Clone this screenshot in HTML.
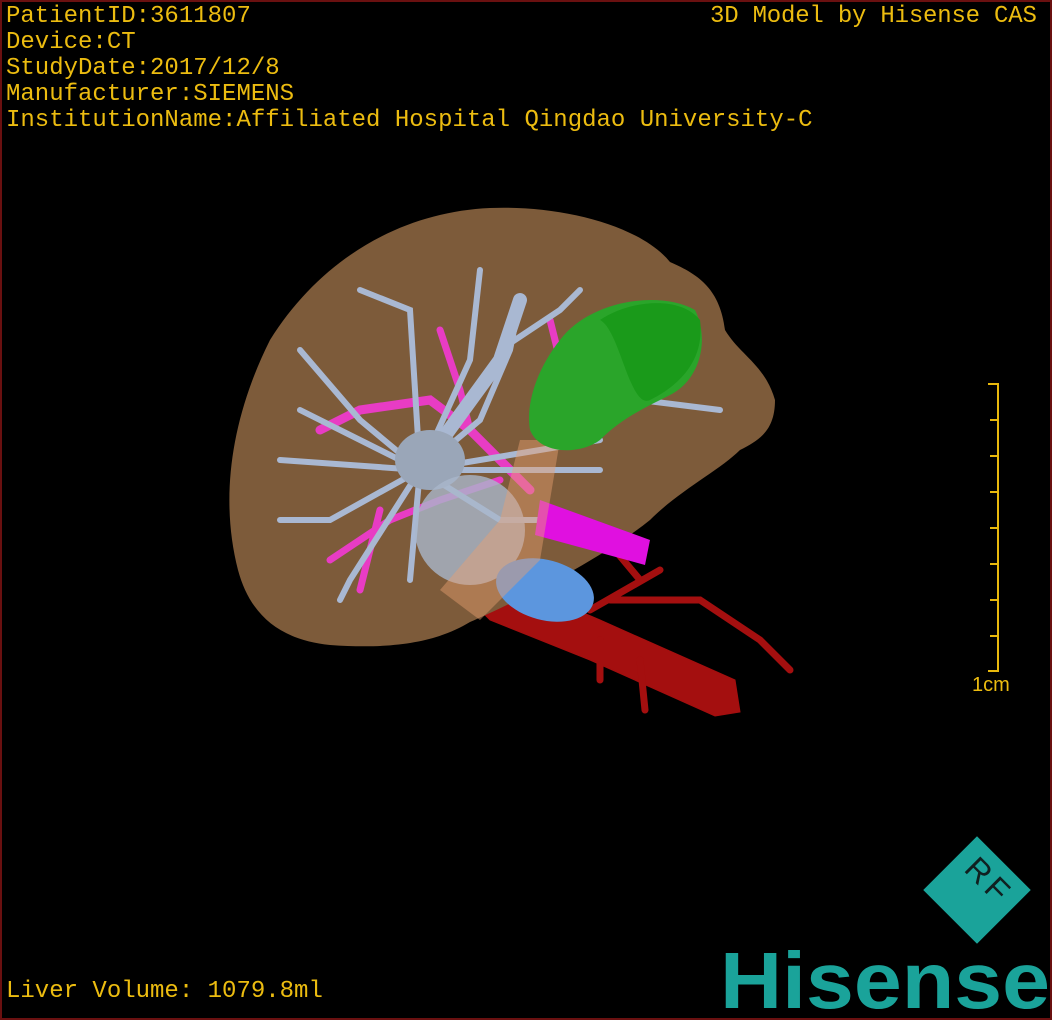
<!DOCTYPE html>
<html><head><meta charset="utf-8"><style>
html,body{margin:0;padding:0;background:#000}
#w{position:relative;width:1048px;height:1016px;border:2px solid #6a1010;background:#000;overflow:hidden}
.t{position:absolute;color:#ecbc10;font-family:"Liberation Mono",monospace;font-size:24px;line-height:26px;white-space:pre;letter-spacing:0}
svg{position:absolute;left:0;top:0}
</style></head><body><div id="w">
<div class="t" style="left:4px;top:2px">PatientID:3611807
Device:CT
StudyDate:2017/12/8
Manufacturer:SIEMENS
InstitutionName:Affiliated Hospital Qingdao University-C</div>
<div class="t" style="left:708px;top:2px;letter-spacing:-0.2px">3D Model by Hisense CAS</div>
<div class="t" style="left:4px;top:977px">Liver Volume: 1079.8ml</div>
<div class="t" style="left:970px;top:670px;font-family:'Liberation Sans',sans-serif;font-size:20px">1cm</div>
<svg width="1048" height="1016" viewBox="2 2 1048 1016">
<g stroke="#e8b80c" stroke-width="2">
<line x1="998" y1="383" x2="998" y2="672"/>
<line x1="988" y1="384" x2="998" y2="384"/><line x1="990" y1="420" x2="998" y2="420"/><line x1="990" y1="456" x2="998" y2="456"/><line x1="990" y1="492" x2="998" y2="492"/><line x1="990" y1="528" x2="998" y2="528"/><line x1="990" y1="564" x2="998" y2="564"/><line x1="990" y1="600" x2="998" y2="600"/><line x1="990" y1="636" x2="998" y2="636"/><line x1="988" y1="671" x2="998" y2="671"/>
</g>
<g fill="#a40f0f" stroke="#a40f0f" stroke-linecap="round">
<path d="M470 600 L530 590 L600 620 L735 680 L740 712 L715 716 L590 660 L490 620Z"/>
<path d="M590 610 L660 570 M610 600 L700 600 L760 640 L790 670 M640 580 L590 520 M600 640 L600 680 M640 660 L645 710" fill="none" stroke-width="7"/>
</g>
<path d="M490 208 C560 205 640 225 670 262 C700 275 720 290 725 330 C740 355 765 365 775 400 C775 430 760 440 740 450 C720 470 680 490 650 520 C600 560 520 600 470 622 C440 640 400 650 330 645 C280 640 250 615 238 570 C220 500 230 420 270 340 C320 260 400 212 490 208Z" fill="#7d5b3a"/>
<g stroke="#e83cc4" fill="none" stroke-linecap="round">
<path d="M320 430 L360 410 L430 400 L470 430 L500 460 L530 490" stroke-width="9"/>
<path d="M440 330 L460 390 L470 430 M330 560 L390 520 L440 500 L500 480 M380 510 L360 590 M550 320 L560 360" stroke-width="7"/>
</g>
<g stroke="#a9b8d2" fill="none" stroke-linecap="round" stroke-width="6">
<path d="M420 470 L360 420 L300 350 M420 470 L280 460 M420 470 L330 520 L280 520 M420 470 L350 580 L340 600 M420 470 L410 580 M420 470 L500 520 L540 520 M420 470 L480 420 L510 350 L520 300 M420 470 L470 360 L480 270 M420 470 L410 310 L360 290 M420 470 L600 440 M500 350 L560 310 L580 290 M420 470 L300 410 M440 470 L600 470 M640 400 L720 410"/>
<path d="M420 470 L500 360 L520 300" stroke-width="14"/>
</g>
<ellipse cx="430" cy="460" rx="35" ry="30" fill="#9aa6b8"/>
<ellipse cx="470" cy="530" rx="55" ry="55" fill="#a9b6ca" opacity=".8"/>
<ellipse cx="545" cy="590" rx="50" ry="30" fill="#5c96de" transform="rotate(15 545 590)"/>
<path d="M540 500 L650 540 L645 565 L535 535Z" fill="#e010e0"/>
<path d="M520 440 L560 440 L540 560 L480 620 L440 590 L500 520Z" fill="#e8a070" opacity=".45"/>
<path d="M560 340 C590 300 660 290 695 310 C710 340 700 380 670 395 C640 410 620 420 600 440 C580 455 540 455 530 430 C525 400 540 365 560 340Z" fill="#2aa52a"/>
<path d="M600 320 C630 300 680 295 700 320 C705 360 680 385 650 400 C630 410 620 330 600 320Z" fill="#1a9a1a"/>
<g transform="translate(977 890) rotate(45)">
<rect x="-38" y="-38" width="76" height="76" fill="#1aa39a"/>
<text x="-24" y="-4" font-family="Liberation Sans,sans-serif" font-size="32" fill="#102020">R</text>
<text x="4" y="-4" font-family="Liberation Sans,sans-serif" font-size="32" fill="#102020">F</text>
</g>
<text x="720" y="1008" font-family="Liberation Sans,sans-serif" font-weight="bold" font-size="80" fill="#1aa39a" textLength="330" lengthAdjust="spacingAndGlyphs">Hisense</text>
</svg>
</div></body></html>
